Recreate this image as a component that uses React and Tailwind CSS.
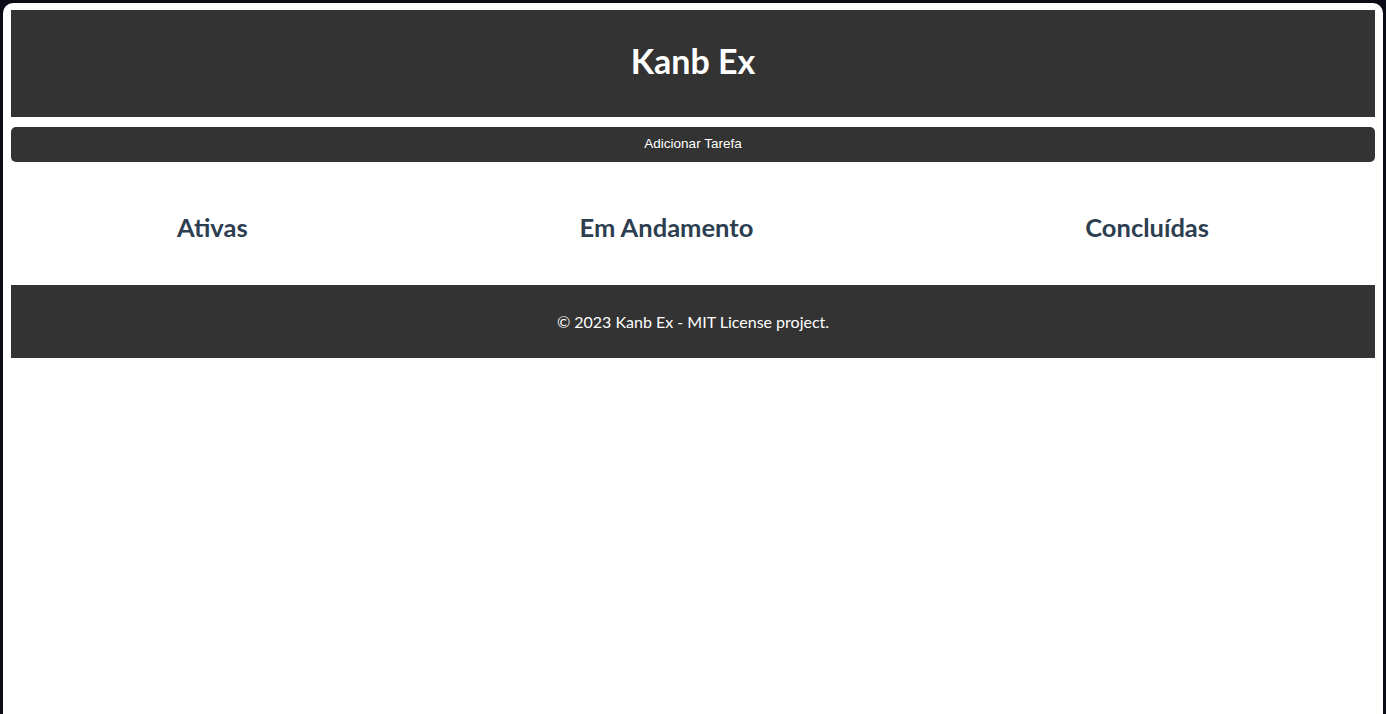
export default function App() {
  return (
    <div className="min-h-[714px] bg-[#0b0b18] pl-[3px] pr-[3px] pt-[3px]">
      <div className="min-h-[711px] rounded-t-[10px] bg-white px-[8px] pt-[7px] font-['Lato','Noto_Sans',sans-serif]">
        <header className="flex h-[107px] items-center justify-center bg-[#333333] pb-[5px]">
          <h1 className="text-[34px] font-bold leading-none text-white">Kanb Ex</h1>
        </header>
        <button className="mt-[10px] flex h-[35px] w-full items-center justify-center rounded-[5px] bg-[#333333] font-['Liberation_Sans',Arial,sans-serif] text-[13.5px] text-white">
          Adicionar Tarefa
        </button>
        <main className="flex h-[123px] items-center justify-around pt-[7px]">
          <h2 className="text-[25.5px] font-bold text-[#2c3e50]">Ativas</h2>
          <h2 className="text-[25.5px] font-bold text-[#2c3e50]">Em Andamento</h2>
          <h2 className="text-[25.5px] font-bold text-[#2c3e50]">Concluídas</h2>
        </main>
        <footer className="flex h-[73px] items-center justify-center bg-[#333333]">
          <p className="text-[16px] text-white">© 2023 Kanb Ex - MIT License project.</p>
        </footer>
      </div>
    </div>
  );
}
